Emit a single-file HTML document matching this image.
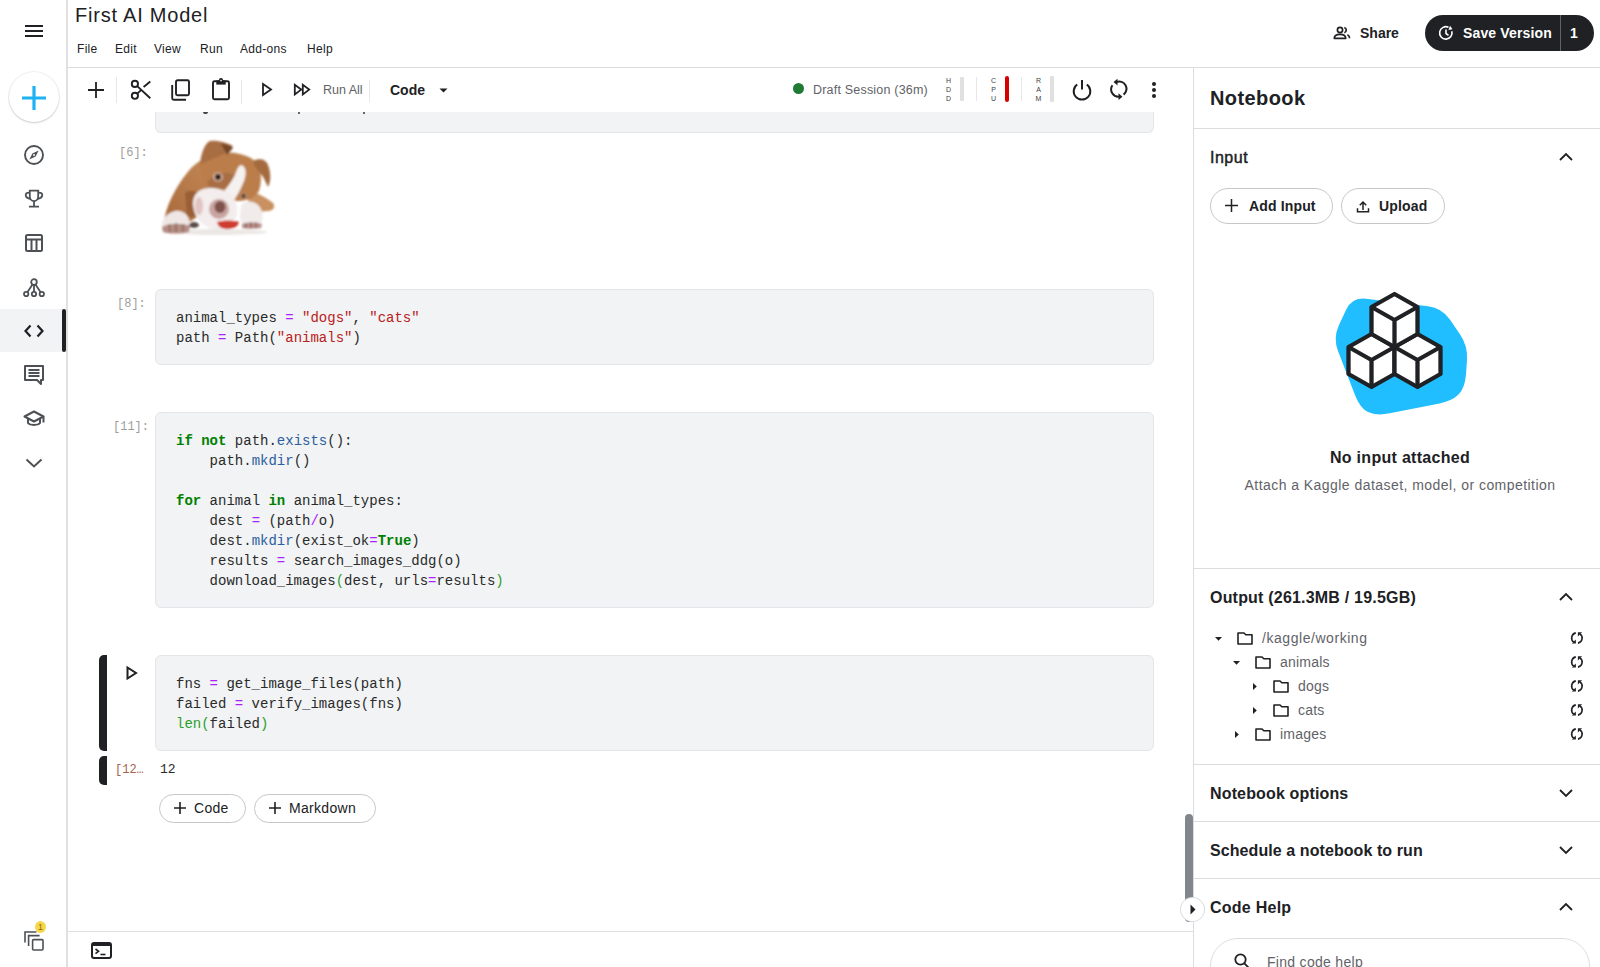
<!DOCTYPE html>
<html><head><meta charset="utf-8">
<style>
*{box-sizing:border-box;margin:0;padding:0}
html,body{width:1600px;height:967px;overflow:hidden;background:#fff;font-family:"Liberation Sans",sans-serif;color:#202124}
.a{position:absolute}
.sv{position:absolute;overflow:visible}
.mono{font-family:"Liberation Mono",monospace}
.vl{position:absolute;background:#dadce0}
.code{position:absolute;font-family:"Liberation Mono",monospace;font-size:14px;line-height:20px;color:#2a2a2a;white-space:pre}
.cell{position:absolute;left:155px;width:999px;background:#f1f3f4;border:1px solid #e3e5e8;border-radius:6px}
.pr{position:absolute;font-family:"Liberation Mono",monospace;font-size:12px;color:#9e9e9e;white-space:pre}
.o{color:#aa22ff}.s{color:#ba2121}.k{color:#008000;font-weight:bold}.f{color:#2c5e9e}.g{color:#2ba02b}
.rh{position:absolute;left:1210px;font-size:16px;font-weight:bold;color:#202124;white-space:nowrap}
.btn{position:absolute;border:1px solid #c5c7ca;border-radius:20px;background:#fff;white-space:nowrap}
</style></head><body>

<!-- LEFT NAV -->
<div class="vl" style="left:66px;top:0;width:2px;height:967px;background:#e0e0e0"></div>

<!-- hamburger -->
<svg class="sv" style="left:24px;top:24px" width="20" height="14" viewBox="0 0 20 14"><path d="M1 2h18M1 7h18M1 12h18" stroke="#202124" stroke-width="2"/></svg>
<!-- FAB -->
<div class="a" style="left:8.5px;top:72px;width:50px;height:50px;border-radius:50%;background:#fff;box-shadow:0 1px 2px rgba(0,0,0,.16),0 0 0 1px rgba(0,0,0,.05)"></div>
<svg class="sv" style="left:22px;top:86px" width="24" height="24" viewBox="0 0 24 24"><path d="M12 0v24M0 12h24" stroke="#1fb2f2" stroke-width="3.2"/></svg>
<!-- compass -->
<svg class="sv" style="left:24px;top:145px" width="20" height="20" viewBox="0 0 20 20"><circle cx="10" cy="10" r="9" fill="none" stroke="#4d5156" stroke-width="1.9"/><path d="M14.6 5.4L11.6 11.6 5.4 14.6 8.4 8.4z" fill="#4d5156"/><circle cx="10" cy="10" r="1" fill="#fff"/></svg>
<!-- trophy -->
<svg class="sv" style="left:24px;top:188px" width="20" height="20" viewBox="0 0 20 20"><path d="M5.8 2.6H14.2V8.5A4.2 4.6 0 0 1 5.8 8.5z" fill="none" stroke="#4d5156" stroke-width="1.8"/><path d="M5.8 4.6C2.8 4.4 1.3 5.6 1.8 7.8 2.2 9.6 3.8 10.6 6.3 10.8M14.2 4.6C17.2 4.4 18.7 5.6 18.2 7.8 17.8 9.6 16.2 10.6 13.7 10.8M10 13v5.5M5 18.6h10" fill="none" stroke="#4d5156" stroke-width="1.8"/></svg>
<!-- table -->
<svg class="sv" style="left:25px;top:234px" width="18" height="18" viewBox="0 0 18 18"><rect x="1" y="1" width="16" height="16" rx="1.5" fill="none" stroke="#4d5156" stroke-width="2"/><path d="M1 5.5h16M6.5 5.5v11.5M11.5 5.5v11.5" stroke="#4d5156" stroke-width="2"/></svg>
<!-- network -->
<svg class="sv" style="left:23px;top:278px" width="22" height="20" viewBox="0 0 22 20"><circle cx="11" cy="4" r="2.8" fill="none" stroke="#4d5156" stroke-width="1.8"/><circle cx="3.2" cy="16" r="2.2" fill="none" stroke="#4d5156" stroke-width="1.8"/><circle cx="11" cy="16" r="2.2" fill="none" stroke="#4d5156" stroke-width="1.8"/><circle cx="18.8" cy="16" r="2.2" fill="none" stroke="#4d5156" stroke-width="1.8"/><path d="M9.5 6.5L4.5 14M11 7v7M12.5 6.5l5 7.5" stroke="#4d5156" stroke-width="1.8"/></svg>
<!-- active code -->
<div class="a" style="left:0;top:309px;width:63px;height:43px;background:#f1f3f4"></div>
<div class="a" style="left:62px;top:309px;width:4px;height:43px;background:#202124;border-radius:2px"></div>
<svg class="sv" style="left:24px;top:324px" width="20" height="14" viewBox="0 0 20 14"><path d="M6.5 1.5L1.5 7l5 5.5M13.5 1.5l5 5.5-5 5.5" fill="none" stroke="#202124" stroke-width="2.2"/></svg>
<!-- comments -->
<svg class="sv" style="left:24px;top:365px" width="20" height="20" viewBox="0 0 20 20"><path d="M1 1h18v14h-2v4l-4-4H1z" fill="none" stroke="#4d5156" stroke-width="2" stroke-linejoin="round"/><path d="M4.5 5h11M4.5 8h11M4.5 11h11" stroke="#4d5156" stroke-width="1.8"/></svg>
<!-- learn -->
<svg class="sv" style="left:23px;top:410px" width="22" height="18" viewBox="0 0 22 18"><path d="M11 1.5L1.5 6.5 11 11.5l9.5-5z" fill="none" stroke="#4d5156" stroke-width="2" stroke-linejoin="round"/><path d="M5 8.5v4.5c2 2.5 10 2.5 12 0V8.5M20.5 6.5v6" fill="none" stroke="#4d5156" stroke-width="2"/></svg>
<!-- chevron down -->
<svg class="sv" style="left:25px;top:458px" width="18" height="10" viewBox="0 0 18 10"><path d="M1.5 1.5L9 8.5l7.5-7" fill="none" stroke="#4d5156" stroke-width="2"/></svg>
<!-- bottom stacked icon -->
<svg class="sv" style="left:24px;top:930px" width="22" height="22" viewBox="0 0 22 22"><path d="M1 12.5V2h11.5M4.6 16V5.6h11" fill="none" stroke="#4d5156" stroke-width="1.6"/><rect x="8.6" y="9.6" width="10.4" height="10.4" rx="1" fill="none" stroke="#4d5156" stroke-width="1.6"/></svg>
<div class="a" style="left:35px;top:921px;width:11px;height:12px;border-radius:50%;background:#f6d64a;font-size:9px;line-height:12px;text-align:center;color:#8a6d00">1</div>

<!-- HEADER -->
<div class="a" style="left:75px;top:3px;font-size:20px;line-height:24px;letter-spacing:0.78px;color:#202124;white-space:nowrap">First AI Model</div>
<div class="a" style="left:77px;top:42px;font-size:12px;line-height:15px;letter-spacing:0.3px;color:#202124;white-space:nowrap">
<span class="a" style="left:0">File</span><span class="a" style="left:38px">Edit</span><span class="a" style="left:77px">View</span><span class="a" style="left:123px">Run</span><span class="a" style="left:163px">Add-ons</span><span class="a" style="left:230px">Help</span></div>
<div class="vl" style="left:68px;top:67px;width:1532px;height:1px;background:#dadce0"></div>
<!-- TOOLBAR -->
<div class="cell" style="top:100px;height:33px;border-top:none"></div>
<div class="a" style="left:68px;top:68px;width:1125px;height:44px;background:#fff"></div>
<div class="a" style="left:203px;top:112px;width:5px;height:1.5px;background:#444;border-radius:0 0 3px 3px"></div><div class="a" style="left:298px;top:112px;width:2px;height:1.5px;background:#666"></div><div class="a" style="left:363px;top:112px;width:2px;height:1.5px;background:#666"></div>

<svg class="sv" style="left:88px;top:82px" width="16" height="16" viewBox="0 0 16 16"><path d="M8 0v16M0 8h16" stroke="#202124" stroke-width="1.8"/></svg>
<div class="vl" style="left:116px;top:77px;width:1px;height:26px;background:#e8e8e8"></div>
<svg class="sv" style="left:130px;top:79px" width="22" height="22" viewBox="0 0 22 22"><circle cx="4.9" cy="4.9" r="3.1" fill="none" stroke="#202124" stroke-width="1.9"/><circle cx="4.9" cy="16.8" r="3.1" fill="none" stroke="#202124" stroke-width="1.9"/><path d="M7.2 7.1L20.3 19.3M13.6 8.1L20.3 2.5M7.3 14.6L11.3 10.9" stroke="#202124" stroke-width="1.9"/></svg>
<svg class="sv" style="left:171px;top:79px" width="20" height="22" viewBox="0 0 20 22"><rect x="5" y="1.3" width="13" height="15" rx="1.5" fill="none" stroke="#202124" stroke-width="1.9"/><path d="M1.2 6v13.3a1.5 1.5 0 0 0 1.5 1.5H15" fill="none" stroke="#202124" stroke-width="1.9"/></svg>
<svg class="sv" style="left:211px;top:78px" width="20" height="22" viewBox="0 0 20 22"><rect x="2" y="3.2" width="16" height="18" rx="1.5" fill="none" stroke="#202124" stroke-width="1.9"/><rect x="5.3" y="2.4" width="9.4" height="4.2" fill="#202124"/><circle cx="10" cy="2.2" r="2.1" fill="#202124"/><circle cx="10" cy="2.6" r="0.8" fill="#fff"/></svg>
<div class="vl" style="left:241px;top:80px;width:1px;height:24px;background:#e8e8e8"></div>
<svg class="sv" style="left:261px;top:82px" width="12" height="15" viewBox="0 0 12 15"><path d="M2 2v11l8-5.5z" fill="none" stroke="#202124" stroke-width="1.8"/></svg>
<svg class="sv" style="left:293px;top:83px" width="19" height="14" viewBox="0 0 19 14"><path d="M1.8 1.8v9.6l6.4-4.8z M9.8 1.8v9.6l6.4-4.8z" fill="none" stroke="#202124" stroke-width="1.8"/></svg>
<div class="a" style="left:323px;top:82px;font-size:12.5px;line-height:16px;color:#5f6368;white-space:nowrap">Run All</div>
<div class="vl" style="left:369px;top:80px;width:1px;height:22px;background:#e8e8e8"></div>
<div class="a" style="left:390px;top:82px;font-size:14px;line-height:17px;font-weight:bold;color:#202124;white-space:nowrap">Code</div>
<svg class="sv" style="left:439px;top:88px" width="9" height="5" viewBox="0 0 9 5"><path d="M0.5 0.5h8L4.5 4.5z" fill="#202124"/></svg>

<div class="a" style="left:793px;top:83px;width:11px;height:11px;border-radius:50%;background:#1e7a34"></div>
<div class="a" style="left:813px;top:82px;font-size:12.5px;line-height:16px;letter-spacing:0.2px;color:#5f6368;white-space:nowrap">Draft Session (36m)</div>
<div class="a" style="left:945px;top:76px;width:7px;font-size:7px;line-height:9px;color:#3c4043;text-align:center">H<br>D<br>D</div>
<div class="a" style="left:960px;top:77px;width:4px;height:24px;background:#e0e0e0;border-radius:1px"></div>
<div class="vl" style="left:976px;top:77px;width:1px;height:24px;background:#e8e8e8"></div>
<div class="a" style="left:990px;top:76px;width:7px;font-size:7px;line-height:9px;color:#3c4043;text-align:center">C<br>P<br>U</div>
<div class="a" style="left:1005px;top:76px;width:4px;height:26px;background:#d50000;border-radius:2px"></div>
<div class="vl" style="left:1021px;top:77px;width:1px;height:24px;background:#e8e8e8"></div>
<div class="a" style="left:1035px;top:76px;width:7px;font-size:7px;line-height:9px;color:#3c4043;text-align:center">R<br>A<br>M</div>
<div class="a" style="left:1050px;top:76px;width:4px;height:26px;background:#e0e0e0;border-radius:1px"></div>
<svg class="sv" style="left:1072px;top:79px" width="20" height="22" viewBox="0 0 20 22"><path d="M10 1v9.5" stroke="#202124" stroke-width="2"/><path d="M5.2 5.5A8.3 8.3 0 1 0 14.8 5.5" fill="none" stroke="#202124" stroke-width="2"/></svg>
<svg class="sv" style="left:1108px;top:79px" width="20" height="22" viewBox="0 0 20 22"><path d="M4.4 6.3A7.3 7.3 0 0 0 11.5 17.6" fill="none" stroke="#202124" stroke-width="2"/><path d="M15.6 15.6A7.3 7.3 0 0 0 8.5 3" fill="none" stroke="#202124" stroke-width="2"/><path d="M10.5 14.3L14.5 17.8 10.5 21z" fill="#202124"/><path d="M9.5 -0.3L5.5 3.1 9.5 6.5z" fill="#202124"/></svg>
<div class="a" style="left:1152px;top:82px;width:4px;height:4px;border-radius:50%;background:#202124;box-shadow:0 6px 0 #202124,0 12px 0 #202124"></div>
<div class="vl" style="left:1193px;top:68px;width:1px;height:899px;background:#dadce0"></div>

<!-- CELLS -->
<div class="pr" style="left:119px;top:146px">[6]:</div>
<!-- DOG -->
<svg class="sv" style="left:155px;top:133px" width="130" height="107" viewBox="0 0 130 107">
<defs><filter id="bl" x="-10%" y="-10%" width="120%" height="120%"><feGaussianBlur stdDeviation="0.8"/></filter>
<linearGradient id="bg1" x1="0" y1="1" x2="1" y2="0"><stop offset="0" stop-color="#a8683a"/><stop offset="1" stop-color="#c48a58"/></linearGradient></defs>
<g filter="url(#bl)">
<ellipse cx="62" cy="99" rx="50" ry="3" fill="#ebe7e5"/>
<path d="M9 90 C10 75 20 55 32 40 C38 32 44 28 48 27 L60 45 L48 80 L30 92z" fill="url(#bg1)"/>
<path d="M30 60 C34 57 40 57 43 61 L41 84 L32 84z" fill="#9a5f35"/>
<path d="M92 60 C100 58 110 64 118 70 C121 74 118 78 112 78 L95 80z" fill="#c8915f"/>
<path d="M44 30 C55 18 80 16 96 25 C106 32 108 45 104 58 C98 68 85 70 70 66 C55 62 45 50 44 30z" fill="#bb7e4c"/>
<path d="M52 50 C58 40 70 38 80 42 C76 52 68 58 58 58z" fill="#a86d42"/>
<path d="M45 31 C46 20 50 10 55 8 C63 7 72 10 78 13 C74 18 68 22 62 24 C55 27 49 30 45 31z" fill="#a86d42"/>
<path d="M66 11 C72 11 76 13 78 15 L72 22 C70 18 68 14 66 11z" fill="#744626"/>
<path d="M98 28 C104 25 111 26 113 32 C116 40 116 48 113 54 C111 50 109 44 105 40 C101 36 99 32 98 28z" fill="#a56a3e"/>
<path d="M86 32 C91 33 92 40 89 48 C86 56 82 63 77 70 L62 66 C70 58 76 50 80 42 C82 37 83 33 86 32z" fill="#f5f1f0"/>
<path d="M38 70 C38 60 46 54 58 55 C70 56 80 62 82 74 C84 86 76 95 62 96 C48 96 38 84 38 70z" fill="#f3eded"/>
<ellipse cx="44" cy="73" rx="4" ry="9" fill="#e3c3c3"/>
<ellipse cx="64" cy="76" rx="10" ry="10" fill="#c9a4a0"/>
<ellipse cx="65" cy="74" rx="5.5" ry="6" fill="#7e524b"/>
<ellipse cx="63" cy="44" rx="5" ry="4.5" fill="#d9b9a8"/>
<circle cx="63" cy="44" r="3.2" fill="#3b2418"/>
<ellipse cx="88.5" cy="63" rx="3.5" ry="3" fill="#b58a70"/>
<circle cx="88.5" cy="63" r="2" fill="#4a3025"/>
<path d="M86 72 C92 66 102 68 106 76 C109 84 108 92 100 94 C92 96 86 92 85 84z" fill="#f1ebea"/>
<path d="M87 91 C92 89 100 89 107 91 L106 95 C100 96 92 96 87 95z" fill="#b89088"/>
<path d="M91 90 L91 95 M96 89 L96 95 M101 89 L101 95" stroke="#7e5c52" stroke-width="1.2"/>
<path d="M62 89 C68 87 78 87 84 89 C83 94 78 96 72 96 C67 96 63 94 62 89z" fill="#cf3b2e"/>
<path d="M7 95 C6 86 12 80 20 78 C28 77 34 82 35 90 C35 97 28 100 20 100 C12 100 7 99 7 95z" fill="#efe7e5"/>
<path d="M7 94 C14 90 27 90 35 93 L34 99 C26 101 14 101 8 99z" fill="#b58c82"/>
<path d="M14 91 L15 99 M21 90 L21 99 M28 91 L28 99" stroke="#7d5a50" stroke-width="1.2"/>
<ellipse cx="39" cy="92" rx="5" ry="3" fill="#5a4a44"/>
</g></svg>

<div class="cell" style="top:289px;height:76px"></div>
<div class="pr" style="left:117px;top:297px">[8]:</div>
<div class="code" style="left:176px;top:308px">animal_types <span class="o">=</span> <span class="s">"dogs"</span>, <span class="s">"cats"</span>
path <span class="o">=</span> Path(<span class="s">"animals"</span>)</div>
<div class="cell" style="top:412px;height:196px"></div>
<div class="pr" style="left:113px;top:420px">[11]:</div>
<div class="code" style="left:176px;top:431px"><span class="k">if</span> <span class="k">not</span> path.<span class="f">exists</span>():
    path.<span class="f">mkdir</span>()

<span class="k">for</span> animal <span class="k">in</span> animal_types:
    dest <span class="o">=</span> (path<span class="o">/</span>o)
    dest.<span class="f">mkdir</span>(exist_ok<span class="o">=</span><span class="k">True</span>)
    results <span class="o">=</span> search_images_ddg(o)
    download_images<span class="g">(</span>dest, urls<span class="o">=</span>results<span class="g">)</span></div>
<div class="a" style="left:99px;top:655px;width:8px;height:96px;background:#202124;border-radius:5px 0 0 5px"></div>
<svg class="sv" style="left:126px;top:666px" width="12" height="14" viewBox="0 0 12 14"><path d="M1.5 1.5v11l8.5-5.5z" fill="none" stroke="#202124" stroke-width="2"/></svg>
<div class="cell" style="top:655px;height:96px"></div>
<div class="code" style="left:176px;top:674px">fns <span class="o">=</span> get_image_files(path)
failed <span class="o">=</span> verify_images(fns)
<span class="g">len(</span>failed<span class="g">)</span></div>
<div class="a" style="left:99px;top:756px;width:8px;height:29px;background:#202124;border-radius:5px 0 0 5px"></div>
<div class="pr" style="left:115px;top:763px;color:#a5634c">[12…</div>
<div class="code" style="left:160px;top:760px;font-size:13px">12</div>
<div class="btn" style="left:159px;top:794px;width:87px;height:29px"></div>
<svg class="sv" style="left:174px;top:802px" width="12" height="12" viewBox="0 0 12 12"><path d="M6 0v12M0 6h12" stroke="#202124" stroke-width="1.6"/></svg>
<div class="a" style="left:194px;top:800px;font-size:14px;line-height:16px;letter-spacing:0.3px;color:#202124">Code</div>
<div class="btn" style="left:254px;top:794px;width:122px;height:29px"></div>
<svg class="sv" style="left:269px;top:802px" width="12" height="12" viewBox="0 0 12 12"><path d="M6 0v12M0 6h12" stroke="#202124" stroke-width="1.6"/></svg>
<div class="a" style="left:289px;top:800px;font-size:14px;line-height:16px;letter-spacing:0.3px;color:#202124">Markdown</div>
<!-- bottom bar -->
<div class="vl" style="left:68px;top:931px;width:1125px;height:1px;background:#e0e0e0"></div>
<svg class="sv" style="left:91px;top:942px" width="21" height="17" viewBox="0 0 21 17"><rect x="1" y="1" width="19" height="15" rx="2" fill="none" stroke="#202124" stroke-width="2"/><rect x="1" y="1" width="19" height="3" fill="#202124"/><path d="M4.5 7l3 2.3-3 2.3" fill="none" stroke="#202124" stroke-width="1.6"/><path d="M9.5 12.5h5" stroke="#202124" stroke-width="1.6"/></svg>
<!-- scrollbar -->
<div class="a" style="left:1185px;top:814px;width:8px;height:108px;background:#80868b;border-radius:4px"></div>
<div class="a" style="left:1181px;top:898px;width:23px;height:23px;border-radius:50%;background:#fff;box-shadow:0 0 0 1px #dadce0"></div>
<svg class="sv" style="left:1190px;top:904px" width="6" height="11" viewBox="0 0 6 11"><path d="M0.5 0.5v10l5-5z" fill="#202124"/></svg>

<!-- RIGHT HEADER -->
<svg class="sv" style="left:1333px;top:26px" width="18" height="14" viewBox="0 0 18 14"><circle cx="7" cy="4" r="2.6" fill="none" stroke="#202124" stroke-width="1.7"/><path d="M1.3 12.3C1.3 9.6 3.8 8.4 7 8.4s5.7 1.2 5.7 3.9z" fill="none" stroke="#202124" stroke-width="1.7" stroke-linejoin="round"/><path d="M11.3 1.5a2.7 2.7 0 0 1 0 5.2M14.4 8.7c1.4.6 2.2 1.8 2.2 3.6" fill="none" stroke="#202124" stroke-width="1.7"/></svg>
<div class="a" style="left:1360px;top:25px;font-size:14px;line-height:17px;font-weight:bold;color:#202124">Share</div>
<div class="a" style="left:1425px;top:15px;width:169px;height:36px;border-radius:18px;background:#202124"></div>
<div class="a" style="left:1560px;top:15px;width:1px;height:36px;background:#5f6368"></div>
<svg class="sv" style="left:1438px;top:25px" width="16" height="16" viewBox="0 0 16 16"><path d="M13.8 6.2A6.2 6.2 0 1 1 10.5 2.3" fill="none" stroke="#fff" stroke-width="1.6"/><path d="M12 0.8l2.5 3.5-4 .8z" fill="#fff"/><path d="M8 4.5v4l2.5 1.8" fill="none" stroke="#fff" stroke-width="1.6"/></svg>
<div class="a" style="left:1463px;top:25px;font-size:14px;line-height:17px;font-weight:bold;letter-spacing:0.15px;color:#fff;white-space:nowrap">Save Version</div>
<div class="a" style="left:1570px;top:25px;font-size:14px;line-height:17px;font-weight:bold;color:#fff">1</div>

<!-- RIGHT PANEL -->
<div class="a" style="left:1210px;top:86px;font-size:20px;line-height:24px;font-weight:bold;letter-spacing:0.4px;color:#202124">Notebook</div>
<div class="vl" style="left:1194px;top:128px;width:406px;height:1px"></div>
<div class="rh" style="top:148px;font-weight:normal;font-size:16px;line-height:19px;letter-spacing:0.5px;-webkit-text-stroke:0.45px #202124">Input</div>
<svg class="sv" style="left:1559px;top:153px" width="14" height="8" viewBox="0 0 14 8"><path d="M1 7l6-6 6 6" fill="none" stroke="#202124" stroke-width="1.8"/></svg>
<div class="btn" style="left:1210px;top:188px;width:123px;height:36px"></div>
<svg class="sv" style="left:1225px;top:199px" width="13" height="13" viewBox="0 0 13 13"><path d="M6.5 0v13M0 6.5h13" stroke="#202124" stroke-width="1.5"/></svg>
<div class="a" style="left:1249px;top:198px;font-size:14px;line-height:17px;font-weight:bold;letter-spacing:0.15px;color:#202124">Add Input</div>
<div class="btn" style="left:1341px;top:188px;width:104px;height:36px"></div>
<svg class="sv" style="left:1356px;top:200px" width="14" height="13" viewBox="0 0 14 13"><path d="M7 10V2.2M3.8 5.2L7 2 10.2 5.2" fill="none" stroke="#202124" stroke-width="1.5"/><path d="M1.5 8.3v3.4h11V8.3" fill="none" stroke="#202124" stroke-width="1.5"/></svg>
<div class="a" style="left:1379px;top:198px;font-size:14px;line-height:17px;font-weight:bold;letter-spacing:0.15px;color:#202124">Upload</div>
<!-- illustration -->
<svg class="sv" style="left:1330px;top:288px" width="145" height="135" viewBox="0 0 145 135"><path d="M8.0 63.1 Q3.0 50.0 8.9 37.3 L16.1 21.7 Q22.0 9.0 35.9 10.7 L98.1 18.3 Q112.0 20.0 119.9 31.6 L130.1 46.4 Q138.0 58.0 137.0 72.0 L136.0 86.0 Q135.0 100.0 128.5 106.5 L128.5 106.5 Q122.0 113.0 108.3 115.7 L59.7 125.3 Q46.0 128.0 38.0 124.0 L38.0 124.0 Q30.0 120.0 25.0 106.9 z" fill="#20beff"/>
<g fill="#fff" stroke="#202124" stroke-width="4.3" stroke-linejoin="round">
<path d="M41.5 46 L64.5 59 L64.5 86 L41.5 99 L18.5 86 L18.5 59z"/><path d="M18.5 59 L41.5 72 L64.5 59 M41.5 72 L41.5 99" fill="none"/><path d="M87.5 46 L110.5 59 L110.5 86 L87.5 99 L64.5 86 L64.5 59z"/><path d="M64.5 59 L87.5 72 L110.5 59 M87.5 72 L87.5 99" fill="none"/><path d="M64.5 6 L87.5 19 L87.5 46 L64.5 59 L41.5 46 L41.5 19z"/><path d="M41.5 19 L64.5 32 L87.5 19 M64.5 32 L64.5 59" fill="none"/>
</g></svg>
<div class="a" style="left:1194px;top:448px;width:412px;text-align:center;font-size:16px;line-height:19px;font-weight:bold;letter-spacing:0.3px;color:#202124">No input attached</div>
<div class="a" style="left:1194px;top:477px;width:412px;text-align:center;font-size:14px;line-height:17px;letter-spacing:0.45px;color:#5f6368">Attach a Kaggle dataset, model, or competition</div>
<div class="vl" style="left:1194px;top:568px;width:406px;height:1px"></div>
<div class="rh" style="top:588px;line-height:19px;letter-spacing:0.2px">Output (261.3MB / 19.5GB)</div>
<svg class="sv" style="left:1559px;top:593px" width="14" height="8" viewBox="0 0 14 8"><path d="M1 7l6-6 6 6" fill="none" stroke="#202124" stroke-width="1.8"/></svg>
<svg class="sv" style="left:1214.5px;top:636.5px" width="7" height="4" viewBox="0 0 7 4"><path d="M0 0h7L3.5 3.8z" fill="#202124"/></svg>
<svg class="sv" style="left:1237px;top:632px" width="16" height="13" viewBox="0 0 16 13"><path d="M1 1h6l1.8 1.8H15V12H1z" fill="none" stroke="#202124" stroke-width="1.6" stroke-linejoin="round"/></svg>
<div class="a" style="left:1262px;top:630px;font-size:14px;line-height:17px;letter-spacing:0.55px;color:#5f6368;white-space:nowrap">/kaggle/working</div>
<svg class="sv" style="left:1570px;top:631px" width="14" height="14" viewBox="0 0 14 14"><path d="M5.8 1.9A5.2 5.2 0 0 0 3.8 11.2" fill="none" stroke="#202124" stroke-width="1.6"/><path d="M1.8 12.6L5.9 12.6 5.9 8.4z" fill="#202124"/><path d="M8 12.1A5.2 5.2 0 0 0 10 2.8" fill="none" stroke="#202124" stroke-width="1.6"/><path d="M7.9 1.3L12.1 1.3 7.9 5.5z" fill="#202124"/></svg>
<svg class="sv" style="left:1232.5px;top:660.5px" width="7" height="4" viewBox="0 0 7 4"><path d="M0 0h7L3.5 3.8z" fill="#202124"/></svg>
<svg class="sv" style="left:1255px;top:656px" width="16" height="13" viewBox="0 0 16 13"><path d="M1 1h6l1.8 1.8H15V12H1z" fill="none" stroke="#202124" stroke-width="1.6" stroke-linejoin="round"/></svg>
<div class="a" style="left:1280px;top:654px;font-size:14px;line-height:17px;letter-spacing:0.2px;color:#5f6368;white-space:nowrap">animals</div>
<svg class="sv" style="left:1570px;top:655px" width="14" height="14" viewBox="0 0 14 14"><path d="M5.8 1.9A5.2 5.2 0 0 0 3.8 11.2" fill="none" stroke="#202124" stroke-width="1.6"/><path d="M1.8 12.6L5.9 12.6 5.9 8.4z" fill="#202124"/><path d="M8 12.1A5.2 5.2 0 0 0 10 2.8" fill="none" stroke="#202124" stroke-width="1.6"/><path d="M7.9 1.3L12.1 1.3 7.9 5.5z" fill="#202124"/></svg>
<svg class="sv" style="left:1253px;top:682.5px" width="4" height="7" viewBox="0 0 4 7"><path d="M0 0v7L3.8 3.5z" fill="#202124"/></svg>
<svg class="sv" style="left:1273px;top:680px" width="16" height="13" viewBox="0 0 16 13"><path d="M1 1h6l1.8 1.8H15V12H1z" fill="none" stroke="#202124" stroke-width="1.6" stroke-linejoin="round"/></svg>
<div class="a" style="left:1298px;top:678px;font-size:14px;line-height:17px;letter-spacing:0.2px;color:#5f6368;white-space:nowrap">dogs</div>
<svg class="sv" style="left:1570px;top:679px" width="14" height="14" viewBox="0 0 14 14"><path d="M5.8 1.9A5.2 5.2 0 0 0 3.8 11.2" fill="none" stroke="#202124" stroke-width="1.6"/><path d="M1.8 12.6L5.9 12.6 5.9 8.4z" fill="#202124"/><path d="M8 12.1A5.2 5.2 0 0 0 10 2.8" fill="none" stroke="#202124" stroke-width="1.6"/><path d="M7.9 1.3L12.1 1.3 7.9 5.5z" fill="#202124"/></svg>
<svg class="sv" style="left:1253px;top:706.5px" width="4" height="7" viewBox="0 0 4 7"><path d="M0 0v7L3.8 3.5z" fill="#202124"/></svg>
<svg class="sv" style="left:1273px;top:704px" width="16" height="13" viewBox="0 0 16 13"><path d="M1 1h6l1.8 1.8H15V12H1z" fill="none" stroke="#202124" stroke-width="1.6" stroke-linejoin="round"/></svg>
<div class="a" style="left:1298px;top:702px;font-size:14px;line-height:17px;letter-spacing:0.2px;color:#5f6368;white-space:nowrap">cats</div>
<svg class="sv" style="left:1570px;top:703px" width="14" height="14" viewBox="0 0 14 14"><path d="M5.8 1.9A5.2 5.2 0 0 0 3.8 11.2" fill="none" stroke="#202124" stroke-width="1.6"/><path d="M1.8 12.6L5.9 12.6 5.9 8.4z" fill="#202124"/><path d="M8 12.1A5.2 5.2 0 0 0 10 2.8" fill="none" stroke="#202124" stroke-width="1.6"/><path d="M7.9 1.3L12.1 1.3 7.9 5.5z" fill="#202124"/></svg>
<svg class="sv" style="left:1235px;top:730.5px" width="4" height="7" viewBox="0 0 4 7"><path d="M0 0v7L3.8 3.5z" fill="#202124"/></svg>
<svg class="sv" style="left:1255px;top:728px" width="16" height="13" viewBox="0 0 16 13"><path d="M1 1h6l1.8 1.8H15V12H1z" fill="none" stroke="#202124" stroke-width="1.6" stroke-linejoin="round"/></svg>
<div class="a" style="left:1280px;top:726px;font-size:14px;line-height:17px;letter-spacing:0.2px;color:#5f6368;white-space:nowrap">images</div>
<svg class="sv" style="left:1570px;top:727px" width="14" height="14" viewBox="0 0 14 14"><path d="M5.8 1.9A5.2 5.2 0 0 0 3.8 11.2" fill="none" stroke="#202124" stroke-width="1.6"/><path d="M1.8 12.6L5.9 12.6 5.9 8.4z" fill="#202124"/><path d="M8 12.1A5.2 5.2 0 0 0 10 2.8" fill="none" stroke="#202124" stroke-width="1.6"/><path d="M7.9 1.3L12.1 1.3 7.9 5.5z" fill="#202124"/></svg>
<div class="vl" style="left:1194px;top:764px;width:406px;height:1px"></div>
<div class="rh" style="top:784px;line-height:19px;letter-spacing:0.15px">Notebook options</div>
<svg class="sv" style="left:1559px;top:789px" width="14" height="8" viewBox="0 0 14 8"><path d="M1 1l6 6 6-6" fill="none" stroke="#202124" stroke-width="1.8"/></svg>
<div class="vl" style="left:1194px;top:821px;width:406px;height:1px"></div>
<div class="rh" style="top:841px;line-height:19px;letter-spacing:0.08px">Schedule a notebook to run</div>
<svg class="sv" style="left:1559px;top:846px" width="14" height="8" viewBox="0 0 14 8"><path d="M1 1l6 6 6-6" fill="none" stroke="#202124" stroke-width="1.8"/></svg>
<div class="vl" style="left:1194px;top:878px;width:406px;height:1px"></div>
<div class="rh" style="top:898px;line-height:19px;letter-spacing:0.25px">Code Help</div>
<svg class="sv" style="left:1559px;top:903px" width="14" height="8" viewBox="0 0 14 8"><path d="M1 7l6-6 6 6" fill="none" stroke="#202124" stroke-width="1.8"/></svg>
<div class="a" style="left:1210px;top:938px;width:380px;height:56px;border:1px solid #dadce0;border-radius:28px"></div>
<svg class="sv" style="left:1234px;top:953px" width="16" height="16" viewBox="0 0 16 16"><circle cx="6.5" cy="6.5" r="5.2" fill="none" stroke="#202124" stroke-width="1.8"/><path d="M10.3 10.3l4.5 4.5" stroke="#202124" stroke-width="1.8"/></svg>
<div class="a" style="left:1267px;top:954px;letter-spacing:0.3px;font-size:14px;line-height:17px;color:#5f6368">Find code help</div>
</body></html>
